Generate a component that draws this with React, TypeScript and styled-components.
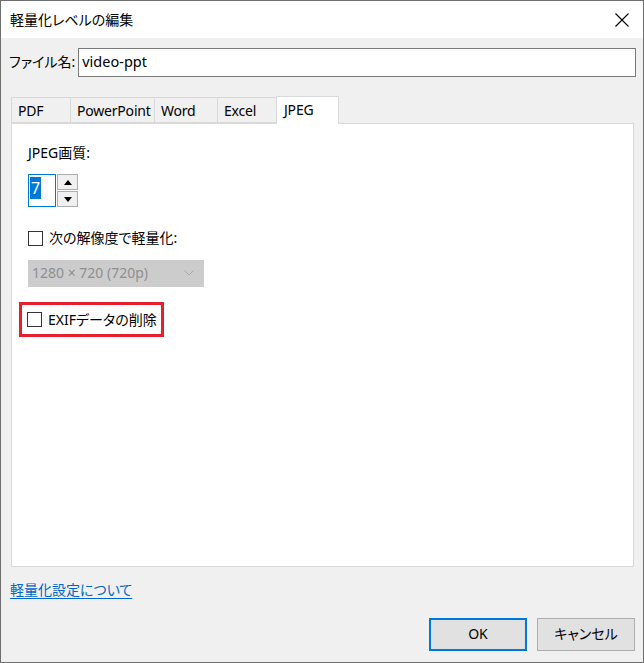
import React from "react";
import styled, { createGlobalStyle } from "styled-components";

const Global = createGlobalStyle`
  html, body { margin: 0; padding: 0; background: #ffffff; }
  * { box-sizing: border-box; }
  body {
    font-family: "Noto Sans", "Noto Sans CJK JP", sans-serif;
    font-feature-settings: "palt";
    font-size: 14px;
    color: #000;
  }
`;

const Window = styled.div`
  width: 644px;
  height: 663px;
  border: 1px solid #6f6f6f;
  display: flex;
  flex-direction: column;
  background: #f0f0f0;
`;

const TitleBar = styled.div`
  height: 37px;
  background: #ffffff;
  display: flex;
  align-items: center;
  justify-content: space-between;
  padding: 0 14px 0 9px;
  flex-shrink: 0;
`;

const Title = styled.span`
  font-size: 14px;
  line-height: 1;
  padding-top: 1px;
`;

const CloseIcon = styled.svg`
  width: 14px;
  height: 14px;
  margin-top: 1px;
`;

const Body = styled.div`
  flex: 1;
  display: flex;
  flex-direction: column;
  padding: 10px 7px 0 8px;
`;

const NameRow = styled.div`
  display: flex;
  align-items: center;
  height: 29px;
  gap: 3px;
`;

const Label = styled.span`
  line-height: 1;
  white-space: nowrap;
  padding-bottom: 1px;
`;

const TextField = styled.div`
  flex: 1;
  height: 29px;
  background: #fff;
  border: 1px solid #7a7a7a;
  display: flex;
  align-items: center;
  padding: 0 0 2px 3px;
  line-height: 1;
  font-size: 14.5px;
`;

const TabStrip = styled.div`
  display: flex;
  align-items: flex-end;
  margin: 19px 0 0 2px;
  height: 27px;
  position: relative;
  z-index: 1;
`;

const Tab = styled.div<{ $active?: boolean; $w: number }>`
  width: ${(p) => p.$w}px;
  height: ${(p) => (p.$active ? 28 : 26)}px;
  margin-bottom: ${(p) => (p.$active ? -1 : 0)}px;
  background: ${(p) => (p.$active ? "#ffffff" : "#f0f0f0")};
  border: 1px solid #d9d9d9;
  border-bottom: ${(p) => (p.$active ? "none" : "1px solid #d9d9d9")};
  margin-left: -1px;
  &:first-child { margin-left: 0; }
  display: flex;
  align-items: ${(p) => (p.$active ? "flex-start" : "center")};
  padding: ${(p) => (p.$active ? "6px 0 0 7px" : "1px 0 0 6px")};
  line-height: 1;
  letter-spacing: -0.2px;
  white-space: nowrap;
`;

const Panel = styled.div`
  margin-left: 2px;
  margin-right: 2px;
  height: 444px;
  background: #ffffff;
  border: 1px solid #d9d9d9;
  display: flex;
  flex-direction: column;
  align-items: flex-start;
  padding: 22px 0 0 16px;
`;

const FieldLabel = styled.div`
  line-height: 1;
  height: 16px;
`;

const Spin = styled.div`
  display: flex;
  gap: 1px;
  margin-top: 12px;
  height: 33px;
`;

const SpinInput = styled.div`
  width: 28px;
  height: 33px;
  border: 1px solid #0078d7;
  background: #fff;
  padding: 2px 0 0 1px;
`;

const Selection = styled.span`
  display: inline-flex;
  align-items: center;
  justify-content: center;
  background: #0078d7;
  color: #fff;
  width: 11px;
  height: 22px;
  font-size: 16px;
  line-height: 1;
`;

const SpinButtons = styled.div`
  display: flex;
  flex-direction: column;
  gap: 1px;
  width: 21px;
`;

const SpinButton = styled.div`
  flex: 1;
  background: #f0f0f0;
  border: 1px solid #adadad;
  display: flex;
  align-items: center;
  justify-content: center;
`;

const Arrow = styled.svg`
  width: 8px;
  height: 5px;
`;

const CheckRow = styled.label<{ $top: number }>`
  display: flex;
  align-items: center;
  gap: 6px;
  margin-top: ${(p) => p.$top}px;
  line-height: 1;
  height: 18px;
`;

const Box = styled.span`
  width: 15px;
  height: 15px;
  border: 1px solid #333333;
  background: #fff;
  flex-shrink: 0;
`;

const Select = styled.div`
  margin-top: 13px;
  width: 176px;
  height: 27px;
  background: #cccccc;
  color: #8f8f8f;
  display: flex;
  align-items: center;
  justify-content: space-between;
  padding: 0 10px 1px 4px;
  line-height: 1;
`;

const Chevron = styled.svg`
  width: 10px;
  height: 6px;
`;

const Highlight = styled.div`
  margin: 15px 0 0 -9px;
  border: 3px solid #e3202c;
  padding: 5px 4px 5px 5px;
  height: 35px;
  display: flex;
  align-items: center;
`;

const HighlightRow = styled.label`
  display: flex;
  align-items: center;
  gap: 6px;
  line-height: 1;
`;

const Link = styled.a`
  margin-top: 16px;
  align-self: flex-start;
  color: #0066cc;
  text-decoration: underline;
  text-underline-offset: 3px;
  line-height: 1;
  padding-left: 1px;
`;

const Footer = styled.div`
  display: flex;
  justify-content: flex-end;
  gap: 10px;
  margin-top: 21px;
  padding-right: 1px;
`;

const Button = styled.div<{ $default?: boolean }>`
  width: 98px;
  height: 33px;
  background: #e1e1e1;
  border: ${(p) => (p.$default ? "2px solid #0078d7" : "1px solid #adadad")};
  display: flex;
  align-items: center;
  justify-content: center;
  line-height: 1;
  padding-bottom: 1px;
`;

const tabs: { name: string; w: number; active?: boolean }[] = [
  { name: "PDF", w: 60 },
  { name: "PowerPoint", w: 85 },
  { name: "Word", w: 64 },
  { name: "Excel", w: 60 },
  { name: "JPEG", w: 63, active: true },
];

export default function App() {
  return (
    <>
      <Global />
      <Window>
        <TitleBar>
          <Title>軽量化レベルの編集</Title>
          <CloseIcon viewBox="0 0 14 14">
            <path d="M0.5 0.5 L13.5 13.5 M13.5 0.5 L0.5 13.5" stroke="#000" strokeWidth="1.1" fill="none" />
          </CloseIcon>
        </TitleBar>
        <Body>
          <NameRow>
            <Label>ファイル名:</Label>
            <TextField>video-ppt</TextField>
          </NameRow>
          <TabStrip>
            {tabs.map((t) => (
              <Tab key={t.name} $w={t.w} $active={t.active}>
                {t.name}
              </Tab>
            ))}
          </TabStrip>
          <Panel>
            <FieldLabel>JPEG画質:</FieldLabel>
            <Spin>
              <SpinInput>
                <Selection>7</Selection>
              </SpinInput>
              <SpinButtons>
                <SpinButton>
                  <Arrow viewBox="0 0 8 5">
                    <path d="M0 5 L4 0 L8 5 Z" fill="#000" />
                  </Arrow>
                </SpinButton>
                <SpinButton>
                  <Arrow viewBox="0 0 8 5">
                    <path d="M0 0 L4 5 L8 0 Z" fill="#000" />
                  </Arrow>
                </SpinButton>
              </SpinButtons>
            </Spin>
            <CheckRow $top={22}>
              <Box />
              次の解像度で軽量化:
            </CheckRow>
            <Select>
              <span>1280 × 720 (720p)</span>
              <Chevron viewBox="0 0 10 6">
                <path d="M0.5 0.5 L5 5 L9.5 0.5" stroke="#a8a8a8" strokeWidth="1" fill="none" />
              </Chevron>
            </Select>
            <Highlight>
              <HighlightRow>
                <Box />
                EXIFデータの削除
              </HighlightRow>
            </Highlight>
          </Panel>
          <Link href="#">軽量化設定について</Link>
          <Footer>
            <Button $default>OK</Button>
            <Button>キャンセル</Button>
          </Footer>
        </Body>
      </Window>
    </>
  );
}
